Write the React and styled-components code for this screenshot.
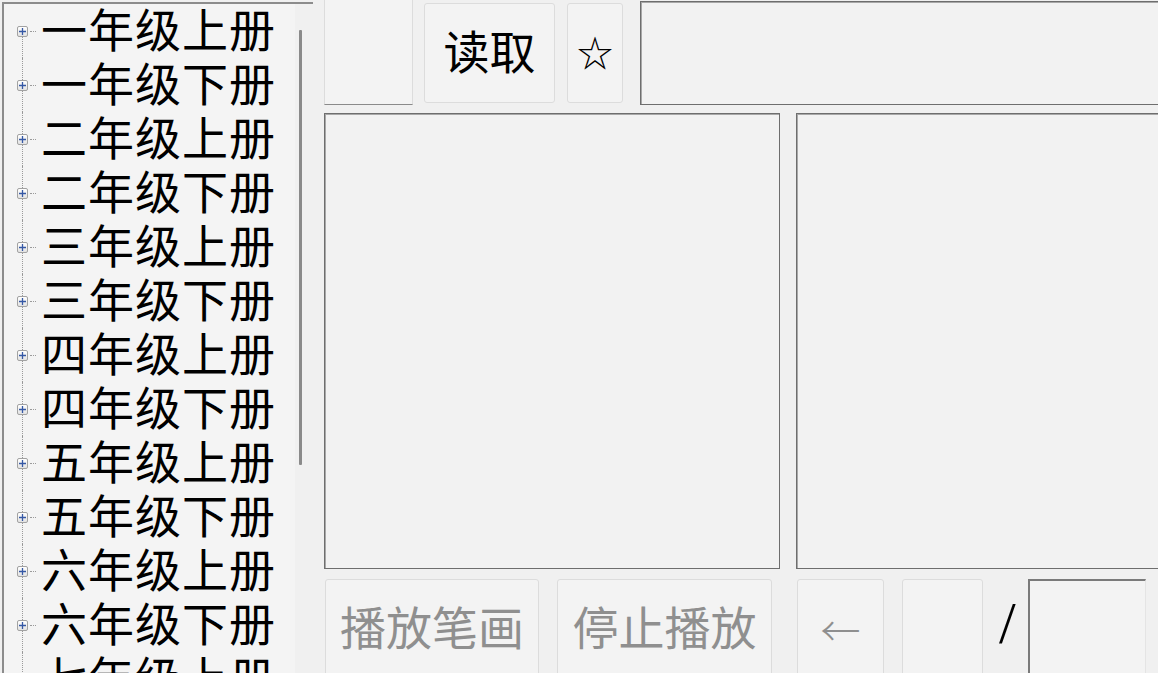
import React from 'react';
import styled, { createGlobalStyle } from 'styled-components';

const GlobalStyle = createGlobalStyle`
  html, body {
    margin: 0;
    padding: 0;
    background: #f0f0f0;
  }
  body {
    font-family: 'Noto Sans CJK SC', 'Noto Sans', sans-serif;
  }
`;

const Window = styled.div`
  display: flex;
  width: 1158px;
  height: 673px;
  overflow: hidden;
  background: #f0f0f0;
`;

const TreePanel = styled.div`
  display: flex;
  flex: none;
  width: 309px;
  height: 700px;
  margin: 2px 0 0 2px;
  border-top: 2px solid #8c8c8c;
  border-left: 2px solid #8c8c8c;
  background: #f4f4f4;
`;

const TreeList = styled.div`
  display: flex;
  flex-direction: column;
  flex: 1;
  padding-left: 12px;
`;

const TreeRow = styled.div`
  display: flex;
  align-items: stretch;
  height: 54px;
`;

const Gutter = styled.div`
  display: flex;
  flex-direction: column;
  align-items: center;
  width: 12px;
`;

const Stem = styled.div`
  flex: 1;
  width: 0;
  border-left: 1px dotted ${p => (p.$hidden ? 'transparent' : '#9a9a9a')};
`;

const Expander = styled.div`
  display: flex;
  align-items: center;
  justify-content: center;
  flex: none;
  width: 9px;
  height: 9px;
  border: 1px solid #a2a2a2;
  border-radius: 2px;
  background: linear-gradient(#ffffff, #e2e2e2);
`;

const Branch = styled.div`
  align-self: center;
  width: 6px;
  margin-left: 2px;
  border-top: 1px dotted #9a9a9a;
`;

const Label = styled.div`
  display: flex;
  align-items: center;
  box-sizing: border-box;
  height: 54px;
  margin-left: 5px;
  padding-bottom: 9px;
  font-size: 46px;
  line-height: 1;
  letter-spacing: 1px;
  color: #000;
  white-space: nowrap;
`;

const ScrollTrack = styled.div`
  display: flex;
  flex: none;
  width: 14px;
  padding: 26px 0 0 4px;
  background: #f0f0f0;
`;

const ScrollThumb = styled.div`
  width: 3px;
  height: 435px;
  background: #8a8a8a;
  border-radius: 1px;
`;

const Main = styled.div`
  display: flex;
  flex-direction: column;
  flex: 1;
  margin-left: 11px;
  min-width: 0;
`;

const TopRow = styled.div`
  display: flex;
  align-items: flex-start;
  height: 105px;
`;

const ComboStub = styled.div`
  flex: none;
  width: 87px;
  height: 104px;
  border: 1px solid #dcdcdc;
  border-top: none;
  border-bottom: 1px solid #8a8a8a;
  background: #f3f3f3;
`;

const Button = styled.button`
  display: flex;
  align-items: center;
  justify-content: center;
  flex: none;
  box-sizing: border-box;
  width: ${p => p.$w}px;
  height: ${p => p.$h || 100}px;
  margin-top: ${p => p.$top || 0}px;
  margin-left: ${p => p.$gap || 0}px;
  padding: 0 0 ${p => p.$lift ?? 8}px;
  border: 1px solid #dcdcdc;
  border-radius: 3px;
  background: #f3f3f3;
  color: ${p => (p.$disabled ? '#8f8f8f' : '#000')};
  font-family: 'Noto Sans CJK SC', sans-serif;
  font-size: ${p => p.$size || 46}px;
  font-weight: ${p => p.$thin ? 300 : 400};
  line-height: 1;
`;

const TextBox = styled.div`
  flex: 1;
  box-sizing: border-box;
  height: 104px;
  margin: 1px 0 0 ${p => p.$gap}px;
  border: 1px solid #6e6e6e;
  border-right: none;
  box-shadow: inset 1px 1px 0 #a8a8a8;
  background: #f2f2f2;
`;

const MiddleRow = styled.div`
  display: flex;
  margin-top: 8px;
  height: 456px;
`;

const Canvas = styled.div`
  box-sizing: border-box;
  flex: ${p => (p.$grow ? 1 : 'none')};
  width: ${p => (p.$grow ? 'auto' : '456px')};
  height: 456px;
  margin-left: ${p => p.$gap || 0}px;
  border: 1px solid #6e6e6e;
  border-right: ${p => (p.$grow ? 'none' : '1px solid #6e6e6e')};
  box-shadow: inset 1px 1px 0 #a8a8a8;
  background: #f2f2f2;
`;

const BottomRow = styled.div`
  display: flex;
  align-items: flex-start;
  margin-top: 10px;
  padding-left: 1px;
`;

const Slash = styled.div`
  flex: none;
  width: 29px;
  margin-left: 16px;
  padding-top: 14px;
  font-family: 'Liberation Serif', serif;
  font-size: 60px;
  line-height: 1;
  color: #000;
`;

const PageInput = styled.div`
  flex: none;
  box-sizing: border-box;
  width: 118px;
  height: 100px;
  border-top: 2px solid #7a7a7a;
  border-left: 2px solid #7a7a7a;
  border-right: 1px solid #e4e4e4;
  background: #f3f3f3;
`;

const PlusIcon = () => (
  <svg width="7" height="7" viewBox="0 0 7 7">
    <path d="M0 3.5H7M3.5 0V7" stroke="#3558a5" strokeWidth="1.3" />
  </svg>
);

const grades = ['一', '二', '三', '四', '五', '六', '七'];
const books = grades.flatMap(g => [`${g}年级上册`, `${g}年级下册`]).slice(0, 13);

const App = () => (
  <>
    <GlobalStyle />
    <Window>
      <TreePanel>
        <TreeList>
          {books.map((name, i) => (
            <TreeRow key={name}>
              <Gutter>
                <Stem $hidden={i === 0} />
                <Expander>
                  <PlusIcon />
                </Expander>
                <Stem />
              </Gutter>
              <Branch />
              <Label>{name}</Label>
            </TreeRow>
          ))}
        </TreeList>
        <ScrollTrack>
          <ScrollThumb />
        </ScrollTrack>
      </TreePanel>

      <Main>
        <TopRow>
          <ComboStub />
          <Button $w={131} $gap={11} $top={3}>读取</Button>
          <Button $w={56} $gap={12} $top={3} $size={36} $lift={4}>☆</Button>
          <TextBox $gap={17} />
        </TopRow>

        <MiddleRow>
          <Canvas />
          <Canvas $grow $gap={16} />
        </MiddleRow>

        <BottomRow>
          <Button $w={214} $disabled>播放笔画</Button>
          <Button $w={215} $gap={18} $disabled>停止播放</Button>
          <Button $w={87} $gap={25} $disabled $size={40} $thin $lift={0}>←</Button>
          <Button $w={81} $gap={18} />
          <Slash>/</Slash>
          <PageInput />
        </BottomRow>
      </Main>
    </Window>
  </>
);

export default App;
